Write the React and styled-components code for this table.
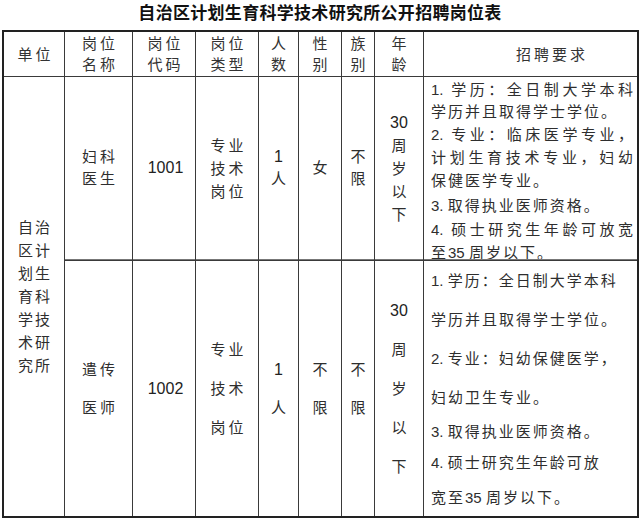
import React from 'react';
import styled, { createGlobalStyle } from 'styled-components';

const GlobalStyle = createGlobalStyle`
  html, body {
    margin: 0;
    padding: 0;
    background: #fff;
  }
  body {
    font-family: "Liberation Sans", "Noto Sans CJK SC", sans-serif;
    color: #2a2a2a;
  }
`;

const CJK = `"Liberation Sans", "Noto Sans CJK SC", sans-serif`;

const Page = styled.div`
  width: 640px;
  height: 520px;
  overflow: hidden;
  background: #fff;
`;

const Title = styled.h1`
  box-sizing: border-box;
  margin: 0;
  height: 30px;
  padding-top: 2px;
  font-family: "Noto Sans CJK SC", sans-serif;
  font-size: 17px;
  font-weight: 700;
  line-height: 20px;
  letter-spacing: 0.3px;
  text-align: center;
  color: #111;
`;

const Table = styled.div`
  box-sizing: border-box;
  margin-left: 2px;
  width: 637px;
  border: 2px solid #222;
  background: #3a3a3a;
  display: grid;
  grid-template-columns: 60px 67px 62px 62px 39px 42px 32px 48px 213px;
  grid-template-rows: 44px 183px 255px;
  gap: 1px;
`;

const HeadCell = styled.div`
  background: #fff;
  display: flex;
  flex-direction: column;
  align-items: center;
  justify-content: center;
  padding-left: ${p => (p.$offset || 0) + 3}px;
  font-family: ${CJK};
  font-size: 15px;
  line-height: 21px;
  letter-spacing: 3px;
  color: #333;
`;

const Cell = styled.div`
  box-sizing: border-box;
  background: #fff;
  display: flex;
  flex-direction: column;
  align-items: center;
  justify-content: center;
  padding-left: ${p => p.$ls ?? 3}px;
  font-family: ${CJK};
  font-size: 15px;
  line-height: ${p => p.$lh || 22}px;
  letter-spacing: ${p => p.$ls ?? 3}px;
  color: #2e2e2e;
  border-bottom: ${p => (p.$first ? '1px solid #777' : 'none')};
  grid-row: ${p => p.$rows || 'auto'};
`;

const Num = styled.span`
  font-family: "Liberation Sans", Arial, sans-serif;
  font-size: 16px;
  letter-spacing: 0;
  color: #222;
`;

const ReqCell = styled.div`
  box-sizing: border-box;
  background: #fff;
  overflow: hidden;
  padding: ${p => p.$top}px 4px 0 7px;
  font-family: ${CJK};
  font-size: 15px;
  letter-spacing: 2px;
  color: #2e2e2e;
  border-bottom: ${p => (p.$first ? '1px solid #777' : 'none')};
`;

const ReqLine = styled.div`
  height: ${p => p.$h}px;
  line-height: ${p => p.$h}px;
  text-align: ${p => (p.$justify ? 'justify' : 'left')};
  text-align-last: ${p => (p.$justify ? 'justify' : 'left')};
  letter-spacing: ${p => (p.$justify ? 0 : 2)}px;
  white-space: ${p => (p.$justify ? 'normal' : 'nowrap')};
  overflow: hidden;

  .n {
    font-family: "Liberation Sans", Arial, sans-serif;
    letter-spacing: 0;
  }
`;

const headers = [
  { lines: ['单位'] },
  { lines: ['岗位', '名称'] },
  { lines: ['岗位', '代码'] },
  { lines: ['岗位', '类型'] },
  { lines: ['人', '数'] },
  { lines: ['性', '别'] },
  { lines: ['族', '别'] },
  { lines: ['年', '龄'] },
  { lines: ['招聘要求'], offset: 40 },
];

const rows = [
  {
    name: ['妇科', '医生'],
    code: '1001',
    type: ['专业', '技术', '岗位'],
    count: ['1', '人'],
    sex: ['女'],
    ethnic: ['不', '限'],
    age: ['30', '周', '岁', '以', '下'],
    lh: 22,
    ageLh: 23,
    top: 2,
    req: [
      { t: [['n', '1. '], '学历：全日制大学本科'], h: 22, j: true },
      { t: ['学历并且取得学士学位。'], h: 22 },
      { t: [['n', '2. '], '专业：临床医学专业，'], h: 23, j: true },
      { t: ['计划生育技术专业，妇幼'], h: 23, j: true },
      { t: ['保健医学专业。'], h: 24 },
      { t: [['n', '3. '], '取得执业医师资格。'], h: 25 },
      { t: [['n', '4. '], '硕士研究生年龄可放宽'], h: 23, j: true },
      { t: ['至', ['n', '35 '], '周岁以下。'], h: 23 },
    ],
  },
  {
    name: ['遣传', '医师'],
    code: '1002',
    type: ['专业', '技术', '岗位'],
    count: ['1', '人'],
    sex: ['不', '限'],
    ethnic: ['不', '限'],
    age: ['30', '周', '岁', '以', '下'],
    lh: 38,
    ageLh: 39,
    top: 0,
    req: [
      { t: [['n', '1. '], '学历：全日制大学本科'], h: 39 },
      { t: ['学历并且取得学士学位。'], h: 39 },
      { t: [['n', '2. '], '专业：妇幼保健医学，'], h: 39 },
      { t: ['妇幼卫生专业。'], h: 39 },
      { t: [['n', '3. '], '取得执业医师资格。'], h: 29 },
      { t: [['n', '4.  '], '硕士研究生年龄可放'], h: 33 },
      { t: ['宽至', ['n', '35 '], '周岁以下。'], h: 38 },
    ],
  },
];

const renderLines = lines =>
  lines.map((l, i) => (/^\d+$/.test(l) ? <Num key={i}>{l}</Num> : <span key={i}>{l}</span>));

const renderReq = parts =>
  parts.map((p, i) =>
    Array.isArray(p) ? (
      <span key={i} className={p[0]}>
        {p[1]}
      </span>
    ) : (
      <span key={i}>{p}</span>
    )
  );

export default function App() {
  return (
    <Page>
      <GlobalStyle />
      <Title>自治区计划生育科学技术研究所公开招聘岗位表</Title>
      <Table>
        {headers.map((h, i) => (
          <HeadCell key={i} $offset={h.offset}>
            {h.lines.map(l => (
              <span key={l}>{l}</span>
            ))}
          </HeadCell>
        ))}

        {rows.map((r, ri) => {
          const first = ri === 0;
          return (
            <React.Fragment key={r.code}>
              {first && (
                <Cell $rows="2 / span 2" $lh={23} $ls={2}>
                  {['自治', '区计', '划生', '育科', '学技', '术研', '究所'].map(l => (
                    <span key={l}>{l}</span>
                  ))}
                </Cell>
              )}
              <Cell $first={first} $lh={r.lh}>
                {renderLines(r.name)}
              </Cell>
              <Cell $first={first}>
                <Num>{r.code}</Num>
              </Cell>
              <Cell $first={first} $lh={r.ageLh}>
                {renderLines(r.type)}
              </Cell>
              <Cell $first={first} $lh={r.lh} $ls={0}>
                {renderLines(r.count)}
              </Cell>
              <Cell $first={first} $lh={r.lh} $ls={0}>
                {renderLines(r.sex)}
              </Cell>
              <Cell $first={first} $lh={r.lh} $ls={0}>
                {renderLines(r.ethnic)}
              </Cell>
              <Cell $first={first} $lh={r.ageLh} $ls={0}>
                {renderLines(r.age)}
              </Cell>
              <ReqCell $first={first} $top={r.top}>
                {r.req.map((line, li) => (
                  <ReqLine key={li} $h={line.h} $justify={line.j}>
                    {renderReq(line.t)}
                  </ReqLine>
                ))}
              </ReqCell>
            </React.Fragment>
          );
        })}
      </Table>
    </Page>
  );
}
